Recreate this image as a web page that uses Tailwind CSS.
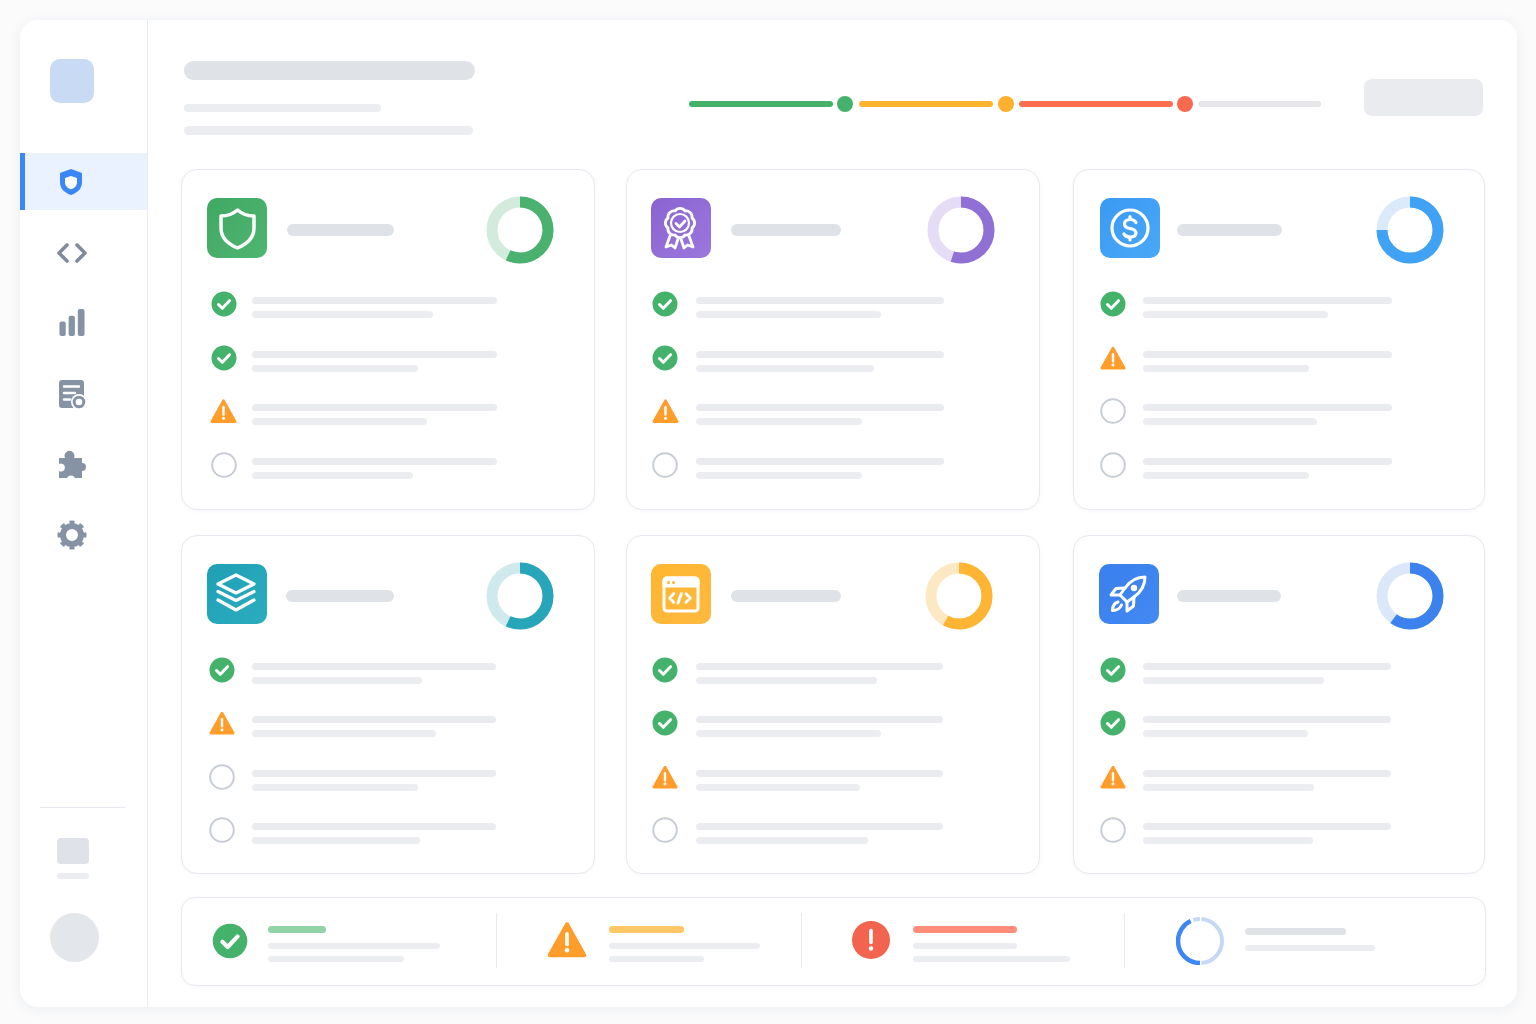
<!DOCTYPE html>
<html lang="en">
<head>
  <meta charset="UTF-8">
  <title>Compliance dashboard</title>
  <script src="https://cdn.jsdelivr.net/npm/@tailwindcss/browser@4"></script>
</head>
<body class="w-[1536px] h-[1024px] overflow-hidden bg-[#fbfbfc] pt-[20px] pl-[20px] pr-[19px] pb-[17px] font-['Liberation_Sans',sans-serif]">
  <!-- Shared status icons -->
  <svg class="absolute w-0 h-0">
    <symbol id="check" viewBox="0 0 26 26">
      <circle cx="13" cy="13" r="12.5" fill="#45b26b"/>
      <path d="M7.500 13.500l3.800 3.800 7.200-7.600" fill="none" stroke="#fff" stroke-width="3" stroke-linecap="round" stroke-linejoin="round"/>
    </symbol>
    <symbol id="warn" viewBox="0 0 28 26">
      <path d="M14 2.500L26 24H2z" fill="#ff9d2b" stroke="#ff9d2b" stroke-width="3" stroke-linejoin="round"/>
      <path d="M14 9v7.500" stroke="#fff" stroke-width="2.600" stroke-linecap="round"/>
      <circle cx="14" cy="20.500" r="1.600" fill="#fff"/>
    </symbol>
    <symbol id="empty" viewBox="0 0 26 26">
      <circle cx="13" cy="13" r="11.800" fill="#fff" stroke="#c8cdd5" stroke-width="2"/>
    </symbol>
  </svg>

  <div class="flex h-full bg-white rounded-[18px] shadow-[0_2px_14px_rgba(30,50,90,0.07)]">
    <!-- Sidebar -->
    <aside class="flex flex-col w-[128px] shrink-0 border-r border-[#e7eaf0] pt-[39px] pb-[45px]">
      <div class="w-[44px] h-[44px] ml-[30px] rounded-[10px] bg-[#c9daf5]"></div>
      <nav class="flex flex-col gap-[14px] mt-[50px]">
        <a class="flex items-center h-[57px] pl-[33px] border-l-[5px] border-[#3b87f5] bg-[#e9f2fe]">
          <svg class="w-[26px] h-[28px]" viewBox="0 0 26 28">
            <path d="M13 1l11 4v9c0 7-5 11-11 13C7 25 2 21 2 14V5z" fill="#3b87f5"/>
            <path d="M13 8l6 2v4.500c0 3.500-2.500 5.500-6 6.800-3.500-1.300-6-3.300-6-6.800V10z" fill="#fff"/>
          </svg>
        </a>
        <a class="flex items-center h-[57px] pl-[37px]">
          <svg class="w-[30px] h-[20px]" viewBox="0 0 30 20" fill="none" stroke="#808c9d" stroke-width="3.600" stroke-linecap="round" stroke-linejoin="round">
            <path d="M10 2L2 10l8 8M20 2l8 8-8 8"/>
          </svg>
        </a>
        <a class="flex items-center h-[57px] pl-[39px] -translate-y-px">
          <svg class="w-[26px] h-[27px]" viewBox="0 0 26 28" fill="#8593a5">
            <rect x="0" y="13" width="6.500" height="15" rx="2"/>
            <rect x="9.500" y="7" width="6.500" height="21" rx="2"/>
            <rect x="19" y="0" width="7" height="28" rx="2"/>
          </svg>
        </a>
        <a class="flex items-center h-[57px] pl-[39px]">
          <svg class="w-[28px] h-[30px]" viewBox="0 0 28 30">
            <rect x="0" y="0" width="25" height="28" rx="3" fill="#8593a5"/>
            <path d="M5 6.500h15M5 13h11M5 19.500h6" stroke="#fff" stroke-width="2.400" stroke-linecap="round"/>
            <circle cx="20" cy="22" r="8" fill="#fff"/>
            <circle cx="20" cy="22" r="4.800" fill="none" stroke="#8593a5" stroke-width="3"/>
          </svg>
        </a>
        <a class="flex items-center h-[57px] pl-[38px] -translate-y-px">
          <svg class="w-[30px] h-[30px]" viewBox="0 0 30 30" fill="#8593a5">
            <path d="M1 8H7A5 5 0 1 1 16 8H24V13A4 4 0 1 1 24 21V28H17A4.500 4.500 0 0 0 9 28H1V21A4 4 0 1 0 1 14Z"/>
          </svg>
        </a>
        <a class="flex items-center h-[57px] pl-[37px] -translate-y-[2px]">
          <svg class="w-[30px] h-[30px]" viewBox="0 0 30 30" fill="none" stroke="#8593a5">
            <circle cx="15" cy="15" r="9" stroke-width="6"/>
            <circle cx="15" cy="15" r="12.500" stroke-width="4" pathLength="80" stroke-dasharray="5 5" stroke-dashoffset="2.500"/>
          </svg>
        </a>
      </nav>
      <div class="mt-auto">
        <div class="w-[86px] ml-[20px] border-t border-[#e7eaf0]"></div>
        <div class="w-[32px] h-[26px] ml-[37px] mt-[30px] rounded-[4px] bg-[#dfe3e9]"></div>
        <div class="w-[32px] h-[6px] ml-[37px] mt-[9px] rounded-full bg-[#ebedf1]"></div>
        <div class="w-[49px] h-[49px] ml-[30px] mt-[34px] rounded-full bg-[#e3e6ea]"></div>
      </div>
    </aside>

    <!-- Main -->
    <main class="pl-[33px]">
      <!-- Header -->
      <header class="flex items-start h-[149px] pt-[41px]">
        <div class="w-[508px] pl-[3px]">
          <div class="w-[291px] h-[19px] rounded-full bg-[#dfe2e7]"></div>
          <div class="w-[197px] h-[8px] mt-[24px] rounded-full bg-[#ebedf1]"></div>
          <div class="w-[289px] h-[9px] mt-[14px] rounded-full bg-[#ebedf1]"></div>
        </div>
        <div class="flex items-center w-[632px] mt-[35px]">
          <div class="w-[144px] h-[6px] rounded-full bg-[#45b26b]"></div>
          <div class="w-[16px] h-[16px] ml-[4px] rounded-full bg-[#45b26b]"></div>
          <div class="w-[134px] h-[6px] ml-[6px] rounded-full bg-[#ffb430]"></div>
          <div class="w-[16px] h-[16px] ml-[5px] rounded-full bg-[#ffb02e]"></div>
          <div class="w-[154px] h-[6px] ml-[5px] rounded-full bg-[#fb6e50]"></div>
          <div class="w-[16px] h-[16px] ml-[4px] rounded-full bg-[#f9694e]"></div>
          <div class="w-[123px] h-[6px] ml-[5px] rounded-full bg-[#e6e7ea]"></div>
        </div>
        <div class="w-[119px] h-[37px] ml-[43px] mt-[18px] rounded-[8px] bg-[#e9ebef]"></div>
      </header>

      <!-- Cards -->
      <section class="grid grid-cols-[445px_447px_412px] grid-rows-[341px_339px] gap-y-[25px]">
        <!-- Card 1 -->
        <div class="w-[414px] pt-[26px] pl-[25px] pr-[40px] bg-white border border-[#e6e9ef] rounded-[16px] shadow-[0_1px_4px_rgba(30,50,90,0.04)]">
          <div class="flex items-start h-[68px] mb-[27px]">
            <div class="flex items-center justify-center w-[60px] h-[60px] mt-[2px] rounded-[10px] bg-linear-to-br from-[#3fa862] to-[#4fb672]">
              <svg class="w-[60px] h-[60px]" viewBox="0 0 60 60" fill="none" stroke="#fff" stroke-width="3.500" stroke-linejoin="round">
                <path d="M30.500 12C35 16 41 18 47 18V30C47 40 40 46 30.500 50C21 46 14 40 14 30V18C20 18 26 16 30.500 12Z"/>
              </svg>
            </div>
            <div class="w-[107px] h-[12px] ml-[20px] mt-[28px] rounded-full bg-[#dfe2e7]"></div>
            <svg class="w-[68px] h-[68px] ml-auto -rotate-90" viewBox="0 0 68 68" fill="none" stroke-width="11">
              <circle cx="34" cy="34" r="28" stroke="#d2ebdc"/>
              <circle cx="34" cy="34" r="28" stroke="#4ab26e" pathLength="100" stroke-dasharray="57 43"/>
            </svg>
          </div>
          <div class="flex h-[53.5px] gap-[15px] pl-[4px]"><svg class="w-[26px] h-[26px]"><use href="#check"/></svg><div class="flex flex-col gap-[7px] pt-[6px]"><div class="w-[245px] h-[7px] rounded-full bg-[#e9ebef]"></div><div class="w-[181px] h-[7px] rounded-full bg-[#ebedf1]"></div></div></div>
          <div class="flex h-[53.5px] gap-[15px] pl-[4px]"><svg class="w-[26px] h-[26px]"><use href="#check"/></svg><div class="flex flex-col gap-[7px] pt-[6px]"><div class="w-[245px] h-[7px] rounded-full bg-[#e9ebef]"></div><div class="w-[166px] h-[7px] rounded-full bg-[#ebedf1]"></div></div></div>
          <div class="flex h-[53.5px] gap-[15px] pl-[3px]"><svg class="w-[27px] h-[26px]"><use href="#warn"/></svg><div class="flex flex-col gap-[7px] pt-[6px]"><div class="w-[245px] h-[7px] rounded-full bg-[#e9ebef]"></div><div class="w-[175px] h-[7px] rounded-full bg-[#ebedf1]"></div></div></div>
          <div class="flex h-[53.5px] gap-[15px] pl-[4px]"><svg class="w-[26px] h-[26px]"><use href="#empty"/></svg><div class="flex flex-col gap-[7px] pt-[6px]"><div class="w-[245px] h-[7px] rounded-full bg-[#e9ebef]"></div><div class="w-[161px] h-[7px] rounded-full bg-[#ebedf1]"></div></div></div>
        </div>

        <!-- Card 2 -->
        <div class="w-[414px] pt-[26px] pl-[24px] pr-[44px] bg-white border border-[#e6e9ef] rounded-[16px] shadow-[0_1px_4px_rgba(30,50,90,0.04)]">
          <div class="flex items-start h-[68px] mb-[27px]">
            <div class="flex items-center justify-center w-[60px] h-[60px] mt-[2px] rounded-[10px] bg-linear-to-br from-[#8a63d2] to-[#9a78dc]">
              <svg class="w-[60px] h-[60px]" viewBox="0 0 60 60" fill="none" stroke="#fff" stroke-linecap="round" stroke-linejoin="round" stroke-width="2.800">
                <g transform="translate(0 3)">
                  <path d="M41 17.030A6 6 0 0 1 41 26.970A6 6 0 0 1 33.970 34A6 6 0 0 1 24.030 34A6 6 0 0 1 17 26.970A6 6 0 0 1 17 17.030A6 6 0 0 1 24.030 10A6 6 0 0 1 33.970 10A6 6 0 0 1 41 17.030Z"/>
                  <circle cx="29" cy="22" r="9" stroke-width="2.200"/>
                  <path d="M25 22.500l3.500 3.500 5.500-6"/>
                </g>
                <path d="M19 38L15 49L20.500 47L24 50L27 41M38 38L42 49L36.500 47L33 50L30 41"/>
              </svg>
            </div>
            <div class="w-[110px] h-[12px] ml-[20px] mt-[28px] rounded-full bg-[#dfe2e7]"></div>
            <svg class="w-[68px] h-[68px] ml-auto -rotate-90" viewBox="0 0 68 68" fill="none" stroke-width="11">
              <circle cx="34" cy="34" r="28" stroke="#e5dcf5"/>
              <circle cx="34" cy="34" r="28" stroke="#9170d6" pathLength="100" stroke-dasharray="55 45"/>
            </svg>
          </div>
          <div class="flex h-[53.5px] gap-[18px] pl-[1px]"><svg class="w-[26px] h-[26px]"><use href="#check"/></svg><div class="flex flex-col gap-[7px] pt-[6px]"><div class="w-[248px] h-[7px] rounded-full bg-[#e9ebef]"></div><div class="w-[185px] h-[7px] rounded-full bg-[#ebedf1]"></div></div></div>
          <div class="flex h-[53.5px] gap-[18px] pl-[1px]"><svg class="w-[26px] h-[26px]"><use href="#check"/></svg><div class="flex flex-col gap-[7px] pt-[6px]"><div class="w-[248px] h-[7px] rounded-full bg-[#e9ebef]"></div><div class="w-[178px] h-[7px] rounded-full bg-[#ebedf1]"></div></div></div>
          <div class="flex h-[53.5px] gap-[18px] pl-[1px]"><svg class="w-[27px] h-[26px]"><use href="#warn"/></svg><div class="flex flex-col gap-[7px] pt-[6px] -ml-px"><div class="w-[248px] h-[7px] rounded-full bg-[#e9ebef]"></div><div class="w-[166px] h-[7px] rounded-full bg-[#ebedf1]"></div></div></div>
          <div class="flex h-[53.5px] gap-[18px] pl-[1px]"><svg class="w-[26px] h-[26px]"><use href="#empty"/></svg><div class="flex flex-col gap-[7px] pt-[6px]"><div class="w-[248px] h-[7px] rounded-full bg-[#e9ebef]"></div><div class="w-[166px] h-[7px] rounded-full bg-[#ebedf1]"></div></div></div>
        </div>

        <!-- Card 3 -->
        <div class="w-[412px] pt-[26px] pl-[26px] pr-[40px] bg-white border border-[#e6e9ef] rounded-[16px] shadow-[0_1px_4px_rgba(30,50,90,0.04)]">
          <div class="flex items-start h-[68px] mb-[27px]">
            <div class="flex items-center justify-center w-[60px] h-[60px] mt-[2px] rounded-[10px] bg-linear-to-br from-[#3a9af3] to-[#4aa8f7]">
              <svg class="w-[60px] h-[60px]" viewBox="0 0 60 60" fill="none" stroke="#fff" stroke-linecap="round" stroke-width="3.200">
                <circle cx="30" cy="30" r="18"/>
                <path d="M36 24.500C35 22.500 33 21.500 30 21.500C26.500 21.500 24.500 23.500 24.500 26C24.500 29 27 30 30 30.500C33 31 36 32 36 35C36 37.500 33.500 39 30 39C27 39 25 38 24 36M30 18.500V21.500M30 39V42"/>
              </svg>
            </div>
            <div class="w-[105px] h-[12px] ml-[17px] mt-[28px] rounded-full bg-[#dfe2e7]"></div>
            <svg class="w-[68px] h-[68px] ml-auto -rotate-90" viewBox="0 0 68 68" fill="none" stroke-width="11">
              <circle cx="34" cy="34" r="28" stroke="#dbeafb"/>
              <circle cx="34" cy="34" r="28" stroke="#3fa2f5" pathLength="100" stroke-dasharray="75 25"/>
            </svg>
          </div>
          <div class="flex h-[53.5px] gap-[17px]"><svg class="w-[26px] h-[26px]"><use href="#check"/></svg><div class="flex flex-col gap-[7px] pt-[6px]"><div class="w-[249px] h-[7px] rounded-full bg-[#e9ebef]"></div><div class="w-[185px] h-[7px] rounded-full bg-[#ebedf1]"></div></div></div>
          <div class="flex h-[53.5px] gap-[17px]"><svg class="w-[26px] h-[26px]"><use href="#warn"/></svg><div class="flex flex-col gap-[7px] pt-[6px]"><div class="w-[249px] h-[7px] rounded-full bg-[#e9ebef]"></div><div class="w-[166px] h-[7px] rounded-full bg-[#ebedf1]"></div></div></div>
          <div class="flex h-[53.5px] gap-[17px]"><svg class="w-[26px] h-[26px]"><use href="#empty"/></svg><div class="flex flex-col gap-[7px] pt-[6px]"><div class="w-[249px] h-[7px] rounded-full bg-[#e9ebef]"></div><div class="w-[174px] h-[7px] rounded-full bg-[#ebedf1]"></div></div></div>
          <div class="flex h-[53.5px] gap-[17px]"><svg class="w-[26px] h-[26px]"><use href="#empty"/></svg><div class="flex flex-col gap-[7px] pt-[6px]"><div class="w-[249px] h-[7px] rounded-full bg-[#e9ebef]"></div><div class="w-[166px] h-[7px] rounded-full bg-[#ebedf1]"></div></div></div>
        </div>

        <!-- Card 4 -->
        <div class="w-[414px] pt-[26px] pl-[25px] pr-[40px] bg-white border border-[#e6e9ef] rounded-[16px] shadow-[0_1px_4px_rgba(30,50,90,0.04)]">
          <div class="flex items-start h-[68px] mb-[27px]">
            <div class="flex items-center justify-center w-[60px] h-[60px] mt-[2px] rounded-[10px] bg-linear-to-br from-[#1f9fb4] to-[#2cadbf]">
              <svg class="w-[60px] h-[60px]" viewBox="0 0 60 60" fill="none" stroke="#fff" stroke-width="3.200" stroke-linecap="round" stroke-linejoin="round">
                <path d="M29 11l18 9-18 9-18-9z"/>
                <path d="M11 27.500l18 9 18-9"/>
                <path d="M11 36l18 10 18-10"/>
              </svg>
            </div>
            <div class="w-[108px] h-[12px] ml-[19px] mt-[28px] rounded-full bg-[#dfe2e7]"></div>
            <svg class="w-[68px] h-[68px] ml-auto -rotate-90" viewBox="0 0 68 68" fill="none" stroke-width="11">
              <circle cx="34" cy="34" r="28" stroke="#cfe9ed"/>
              <circle cx="34" cy="34" r="28" stroke="#28a6b9" pathLength="100" stroke-dasharray="57 43"/>
            </svg>
          </div>
          <div class="flex h-[53.3px] gap-[17px] pl-[2px]"><svg class="w-[26px] h-[26px]"><use href="#check"/></svg><div class="flex flex-col gap-[7px] pt-[6px]"><div class="w-[244px] h-[7px] rounded-full bg-[#e9ebef]"></div><div class="w-[170px] h-[7px] rounded-full bg-[#ebedf1]"></div></div></div>
          <div class="flex h-[53.3px] gap-[17px] pl-[2px]"><svg class="w-[26px] h-[26px]"><use href="#warn"/></svg><div class="flex flex-col gap-[7px] pt-[6px]"><div class="w-[244px] h-[7px] rounded-full bg-[#e9ebef]"></div><div class="w-[184px] h-[7px] rounded-full bg-[#ebedf1]"></div></div></div>
          <div class="flex h-[53.3px] gap-[17px] pl-[2px]"><svg class="w-[26px] h-[26px]"><use href="#empty"/></svg><div class="flex flex-col gap-[7px] pt-[6px]"><div class="w-[244px] h-[7px] rounded-full bg-[#e9ebef]"></div><div class="w-[166px] h-[7px] rounded-full bg-[#ebedf1]"></div></div></div>
          <div class="flex h-[53.3px] gap-[17px] pl-[2px]"><svg class="w-[26px] h-[26px]"><use href="#empty"/></svg><div class="flex flex-col gap-[7px] pt-[6px]"><div class="w-[244px] h-[7px] rounded-full bg-[#e9ebef]"></div><div class="w-[168px] h-[7px] rounded-full bg-[#ebedf1]"></div></div></div>
        </div>

        <!-- Card 5 -->
        <div class="w-[414px] pt-[26px] pl-[24px] pr-[46px] bg-white border border-[#e6e9ef] rounded-[16px] shadow-[0_1px_4px_rgba(30,50,90,0.04)]">
          <div class="flex items-start h-[68px] mb-[27px]">
            <div class="flex items-center justify-center w-[60px] h-[60px] mt-[2px] rounded-[10px] bg-linear-to-br from-[#ffb52e] to-[#ffb940]">
              <svg class="w-[60px] h-[60px]" viewBox="0 0 60 60" fill="none" stroke="#fff" stroke-linecap="round" stroke-linejoin="round" stroke-width="3">
                <rect x="13" y="14" width="34" height="33" rx="3"/>
                <path d="M13 17a3 3 0 0 1 3-3h28a3 3 0 0 1 3 3v5H13z" fill="#fff"/>
                <circle cx="17.500" cy="18.500" r="1.500" fill="#ffb52e" stroke="none"/>
                <circle cx="22.500" cy="18.500" r="1.500" fill="#ffb52e" stroke="none"/>
                <path d="M22.700 29.700L18.700 34l4 4.300M30.300 29.700L27 39M35 29.700L39.300 34 35 38.300"/>
              </svg>
            </div>
            <div class="w-[110px] h-[12px] ml-[20px] mt-[28px] rounded-full bg-[#dfe2e7]"></div>
            <svg class="w-[68px] h-[68px] ml-auto -rotate-90" viewBox="0 0 68 68" fill="none" stroke-width="11">
              <circle cx="34" cy="34" r="28" stroke="#fde8c4"/>
              <circle cx="34" cy="34" r="28" stroke="#ffb534" pathLength="100" stroke-dasharray="58 42"/>
            </svg>
          </div>
          <div class="flex h-[53.3px] gap-[18px] pl-[1px]"><svg class="w-[26px] h-[26px]"><use href="#check"/></svg><div class="flex flex-col gap-[7px] pt-[6px]"><div class="w-[247px] h-[7px] rounded-full bg-[#e9ebef]"></div><div class="w-[181px] h-[7px] rounded-full bg-[#ebedf1]"></div></div></div>
          <div class="flex h-[53.3px] gap-[18px] pl-[1px]"><svg class="w-[26px] h-[26px]"><use href="#check"/></svg><div class="flex flex-col gap-[7px] pt-[6px]"><div class="w-[247px] h-[7px] rounded-full bg-[#e9ebef]"></div><div class="w-[185px] h-[7px] rounded-full bg-[#ebedf1]"></div></div></div>
          <div class="flex h-[53.3px] gap-[18px] pl-[1px]"><svg class="w-[26px] h-[26px]"><use href="#warn"/></svg><div class="flex flex-col gap-[7px] pt-[6px]"><div class="w-[247px] h-[7px] rounded-full bg-[#e9ebef]"></div><div class="w-[164px] h-[7px] rounded-full bg-[#ebedf1]"></div></div></div>
          <div class="flex h-[53.3px] gap-[18px] pl-[1px]"><svg class="w-[26px] h-[26px]"><use href="#empty"/></svg><div class="flex flex-col gap-[7px] pt-[6px]"><div class="w-[247px] h-[7px] rounded-full bg-[#e9ebef]"></div><div class="w-[172px] h-[7px] rounded-full bg-[#ebedf1]"></div></div></div>
        </div>

        <!-- Card 6 -->
        <div class="w-[412px] pt-[26px] pl-[25px] pr-[40px] bg-white border border-[#e6e9ef] rounded-[16px] shadow-[0_1px_4px_rgba(30,50,90,0.04)]">
          <div class="flex items-start h-[68px] mb-[27px]">
            <div class="flex items-center justify-center w-[60px] h-[60px] mt-[2px] rounded-[10px] bg-linear-to-br from-[#3a80ee] to-[#4289f2]">
              <svg class="w-[60px] h-[60px]" viewBox="0 0 60 60" fill="none" stroke="#fff" stroke-width="3" stroke-linejoin="round" stroke-linecap="round">
                <path d="M46 13C38 13 31 17 26 24L21 31L28 38L35 33C42 28 46 21 46 13Z"/>
                <path d="M26 24L17 24.500L12 31L21 31M35 33L34.500 42L28 47L28 38"/>
                <path d="M19 38C15.500 39 13.500 42 13.500 46.500C18 46.500 21 44.500 22.500 41"/>
                <circle cx="35" cy="24" r="3.200" fill="#fff" stroke="none"/>
              </svg>
            </div>
            <div class="w-[104px] h-[12px] ml-[18px] mt-[28px] rounded-full bg-[#dfe2e7]"></div>
            <svg class="w-[68px] h-[68px] ml-auto -rotate-90" viewBox="0 0 68 68" fill="none" stroke-width="11">
              <circle cx="34" cy="34" r="28" stroke="#dce8f9"/>
              <circle cx="34" cy="34" r="28" stroke="#3b82ee" pathLength="100" stroke-dasharray="60 40"/>
            </svg>
          </div>
          <div class="flex h-[53.3px] gap-[17px] pl-[1px]"><svg class="w-[26px] h-[26px]"><use href="#check"/></svg><div class="flex flex-col gap-[7px] pt-[6px]"><div class="w-[248px] h-[7px] rounded-full bg-[#e9ebef]"></div><div class="w-[181px] h-[7px] rounded-full bg-[#ebedf1]"></div></div></div>
          <div class="flex h-[53.3px] gap-[17px] pl-[1px]"><svg class="w-[26px] h-[26px]"><use href="#check"/></svg><div class="flex flex-col gap-[7px] pt-[6px]"><div class="w-[248px] h-[7px] rounded-full bg-[#e9ebef]"></div><div class="w-[165px] h-[7px] rounded-full bg-[#ebedf1]"></div></div></div>
          <div class="flex h-[53.3px] gap-[17px] pl-[1px]"><svg class="w-[26px] h-[26px]"><use href="#warn"/></svg><div class="flex flex-col gap-[7px] pt-[6px]"><div class="w-[248px] h-[7px] rounded-full bg-[#e9ebef]"></div><div class="w-[171px] h-[7px] rounded-full bg-[#ebedf1]"></div></div></div>
          <div class="flex h-[53.3px] gap-[17px] pl-[1px]"><svg class="w-[26px] h-[26px]"><use href="#empty"/></svg><div class="flex flex-col gap-[7px] pt-[6px]"><div class="w-[248px] h-[7px] rounded-full bg-[#e9ebef]"></div><div class="w-[170px] h-[7px] rounded-full bg-[#ebedf1]"></div></div></div>
        </div>
      </section>

      <!-- Summary bar -->
      <section class="flex items-start w-[1305px] h-[89px] mt-[23px] pt-[15px] bg-white border border-[#e6e9ef] rounded-[14px] shadow-[0_1px_4px_rgba(30,50,90,0.04)]">
        <div class="flex w-[314px] h-[55px] pl-[30px]">
          <svg class="w-[36px] h-[36px] mt-[10px]" viewBox="0 0 26 26"><use href="#check"/></svg>
          <div class="ml-[20px] pt-[13px]">
            <div class="w-[58px] h-[7px] rounded-full bg-[#8fd3a6]"></div>
            <div class="w-[172px] h-[6px] mt-[10px] rounded-full bg-[#ebedf1]"></div>
            <div class="w-[136px] h-[6px] mt-[7px] rounded-full bg-[#ebedf1]"></div>
          </div>
        </div>
        <div class="flex w-[305px] h-[55px] pl-[50px] border-l border-[#e7eaf0]">
          <svg class="w-[40px] h-[37px] mt-[8px]" viewBox="0 0 28 26"><use href="#warn"/></svg>
          <div class="ml-[22px] pt-[13px]">
            <div class="w-[75px] h-[7px] rounded-full bg-[#ffc766]"></div>
            <div class="w-[151px] h-[6px] mt-[10px] rounded-full bg-[#ebedf1]"></div>
            <div class="w-[95px] h-[6px] mt-[7px] rounded-full bg-[#ebedf1]"></div>
          </div>
        </div>
        <div class="flex w-[323px] h-[55px] pl-[50px] border-l border-[#e7eaf0]">
          <svg class="w-[38px] h-[38px] mt-[8px]" viewBox="0 0 38 38">
            <circle cx="19" cy="19" r="19" fill="#f2644f"/>
            <path d="M19 9.500v12" stroke="#fff" stroke-width="3.600" stroke-linecap="round"/>
            <circle cx="19" cy="27.500" r="2.200" fill="#fff"/>
          </svg>
          <div class="ml-[23px] pt-[13px]">
            <div class="w-[104px] h-[7px] rounded-full bg-[#ff8d7a]"></div>
            <div class="w-[104px] h-[6px] mt-[10px] rounded-full bg-[#ebedf1]"></div>
            <div class="w-[157px] h-[6px] mt-[7px] rounded-full bg-[#ebedf1]"></div>
          </div>
        </div>
        <div class="flex h-[55px] pl-[51px] border-l border-[#e7eaf0]">
          <svg class="w-[48px] h-[48px] mt-[4px] -rotate-90" viewBox="0 0 48 48" fill="none" stroke-width="4">
            <circle cx="24" cy="24" r="22" stroke="#c5d8f5" pathLength="100" stroke-dasharray="48 46 5 1" stroke-dashoffset="-1"/>
            <circle cx="24" cy="24" r="22" stroke="#3b87f5" stroke-width="4.500" pathLength="100" stroke-dasharray="43 57" stroke-dashoffset="-50"/>
          </svg>
          <div class="ml-[21px] pt-[15px]">
            <div class="w-[101px] h-[7px] rounded-full bg-[#dfe2e7]"></div>
            <div class="w-[130px] h-[6px] mt-[10px] rounded-full bg-[#ebedf1]"></div>
          </div>
        </div>
      </section>
    </main>
  </div>
</body>
</html>
